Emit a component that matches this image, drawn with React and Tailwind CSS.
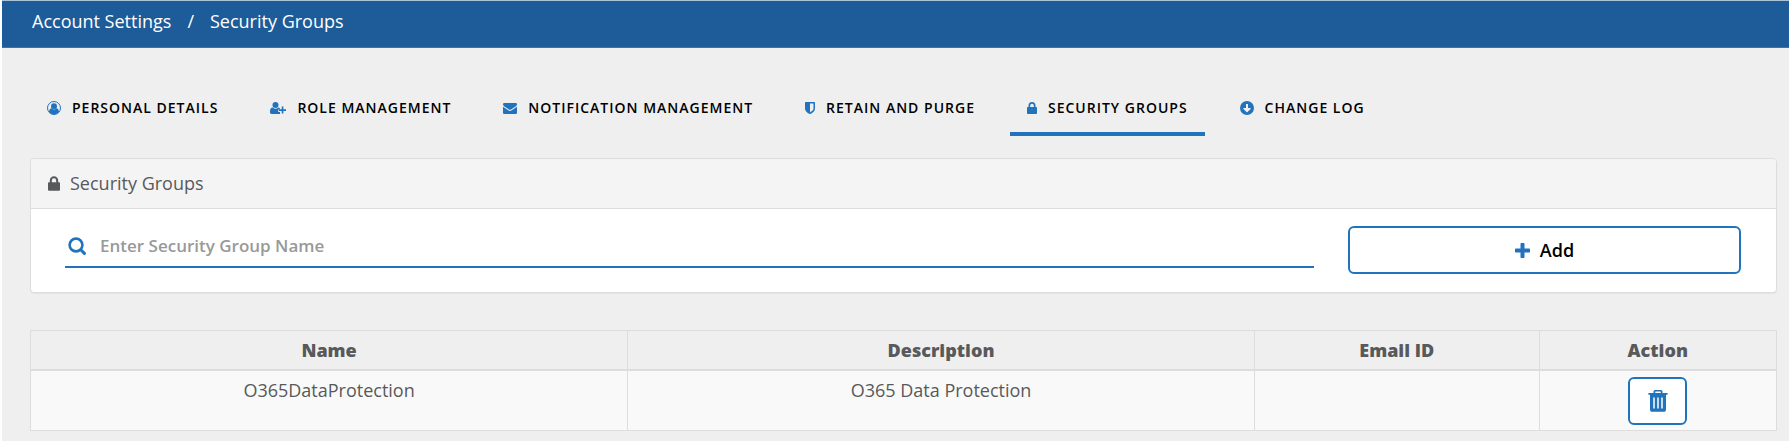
const tabs = [
  { label: 'Personal Details', icon: UserCircleIcon },
  { label: 'Role Management', icon: UserPlusIcon },
  { label: 'Notification Management', icon: EnvelopeIcon },
  { label: 'Retain and Purge', icon: ShieldIcon },
  { label: 'Security Groups', icon: LockIcon, active: true },
  { label: 'Change Log', icon: ArrowDownIcon },
];

const groups = [{ name: 'O365DataProtection', description: 'O365 Data Protection', email: '' }];

function UserCircleIcon() {
  return (
    <svg viewBox="0 0 14 14" className="h-[14px] w-[14px]" aria-hidden="true">
      <circle cx="7" cy="7" r="6.500" fill="none" stroke="currentColor" strokeWidth="1" />
      <circle cx="7" cy="5.300" r="3" fill="currentColor" />
      <path d="M1.900 10.900C2.200 8.700 3.200 7.500 4.600 7.300a3.400 3.400 0 0 0 4.800 0c1.400.2 2.400 1.400 2.700 3.600A6 6 0 0 1 7 13.300a6 6 0 0 1-5.100-2.400z" fill="currentColor" />
    </svg>
  );
}

function UserPlusIcon() {
  return (
    <svg viewBox="0 0 16 14" className="h-[14px] w-[16px]" fill="currentColor" aria-hidden="true">
      <circle cx="5.500" cy="4" r="3" />
      <path d="M2.700 6.500a4 4 0 0 0 5.600 0c.7 0 1.200.3 1.600.8V8.500H8.300v2.400H10v2.100H1.700C.7 13 0 12.400 0 11.300c0-2.300.4-4.800 2.700-4.800z" />
      <path d="M11.700 5.500h1.700v2.700H16v1.700h-2.600v2.700h-1.700V9.900H9V8.200h2.700z" />
    </svg>
  );
}

function EnvelopeIcon() {
  return (
    <svg viewBox="0 0 14 14" className="h-[14px] w-[14px]" fill="currentColor" aria-hidden="true">
      <path d="M14 5.500v6.200c0 .7-.6 1.300-1.300 1.300H1.300C.6 13 0 12.400 0 11.700V5.500c.3.3.5.500.8.700C2.200 7.200 3.600 8.100 5 9.100c.7.5 1.300.9 2 .9s1.300-.4 2-.9c1.400-1 2.800-1.900 4.200-2.900.3-.2.500-.4.8-.7z" />
      <path d="M14 3.200c0 .9-.7 1.700-1.400 2.200L8.800 8.100c-.5.3-1.200.9-1.800.9s-1.300-.6-1.800-.9L1.400 5.400C.8 5 0 4 0 3.300 0 2.600.4 2 1.300 2h11.400c.7 0 1.300.5 1.300 1.200z" />
    </svg>
  );
}

function ShieldIcon() {
  return (
    <svg viewBox="0 0 10 14" className="h-[14px] w-[10px]" fill="currentColor" aria-hidden="true">
      <path fillRule="evenodd" d="M.5 1h9c.3 0 .5.2.5.5v6c0 3.300-4.300 5.500-5 5.500S0 10.800 0 7.500v-6C0 1.200.2 1 .5 1zM5 2.500v8.800c.5-.3 3.500-1.800 3.500-3.800v-5z" />
    </svg>
  );
}

function LockIcon({ className = 'h-[14px] w-[10px]' }) {
  return (
    <svg viewBox="0 0 10 14" className={className} fill="currentColor" aria-hidden="true">
      <path fillRule="evenodd" d="M1.500 6V4.500a3.500 3.500 0 0 1 7 0V6h.7c.5 0 .8.3.8.800v5.400c0 .5-.3.8-.8.8H.8c-.5 0-.8-.3-.8-.8V6.800C0 6.300.3 6 .8 6zM3.200 6h3.600V4.500a1.800 1.800 0 0 0-3.600 0z" />
    </svg>
  );
}

function ArrowDownIcon() {
  return (
    <svg viewBox="0 0 14 14" className="h-[14px] w-[14px]" fill="currentColor" aria-hidden="true">
      <path fillRule="evenodd" d="M7 0a7 7 0 1 1 0 14A7 7 0 0 1 7 0zM6 3v4H3.400v.9L7 11.400l3.600-3.500V7H8V3z" />
    </svg>
  );
}

function SearchIcon() {
  return (
    <svg viewBox="0 0 18 18" className="h-[18px] w-[18px]" fill="none" stroke="currentColor" strokeLinecap="round" aria-hidden="true">
      <circle cx="8" cy="8" r="6.400" strokeWidth="2.600" />
      <path d="M13 13l3.400 3.400" strokeWidth="3" />
    </svg>
  );
}

function PlusIcon() {
  return (
    <svg viewBox="0 0 15 15" className="h-[15px] w-[15px]" fill="currentColor" aria-hidden="true">
      <path d="M6.200 0h2.600c.4 0 .7.3.7.700v4.800h4.800c.4 0 .7.3.7.700v2.600c0 .4-.3.7-.7.7H9.500v4.800c0 .4-.3.7-.7.7H6.200c-.4 0-.7-.3-.7-.7V9.500H.7C.3 9.500 0 9.200 0 8.800V6.200c0-.4.3-.7.7-.7h4.800V.7c0-.4.3-.7.7-.7z" />
    </svg>
  );
}

function TrashIcon() {
  return (
    <svg viewBox="0 0 20 22" className="h-[22px] w-[20px]" fill="currentColor" aria-hidden="true">
      <path fillRule="evenodd" d="M7.200 0h5.600C14 0 14.500.8 14.500 1.800V3h4.700c.3 0 .5.200.5.500v.8c0 .3-.2.500-.5.500H18v14.700c0 1.400-.9 2.300-2 2.300H4c-1.100 0-2-.9-2-2.300V4.800H.8c-.3 0-.5-.2-.5-.5v-.8c0-.3.2-.5.5-.5h4.700V1.800C5.500.8 6 0 7.200 0zM7.700 1.500c-.3 0-.5.200-.5.500v1h5.600V2c0-.3-.2-.5-.5-.5zM5.250 7.500v11h1.500v-11zM9.250 7.500v11h1.500v-11zM13.250 7.500v11h1.500v-11z" />
    </svg>
  );
}

export default function App() {
  return (
    <div className="min-h-screen border-l-2 border-white bg-[#efefef] font-['Open_Sans',sans-serif] text-[#58595b]">
      <header className="border-t border-b border-t-[#a9c3db] border-b-[#3f72a8] bg-[#1d5c99] px-[30px] pt-[7px] pb-[13px]">
        <nav aria-label="Breadcrumb" className="flex gap-4 text-lg leading-[26px] text-white">
          <a href="#account">Account Settings</a>
          <span>/</span>
          <a href="#groups">Security Groups</a>
        </nav>
      </header>

      <main className="px-7 pr-3 pb-3">
        <nav aria-label="Settings" className="flex gap-[18px] pt-10 pb-[22px]">
          {tabs.map(({ label, icon: Icon, active }) => (
            <a
              key={label}
              href="#tab"
              aria-current={active ? 'page' : undefined}
              className={`flex items-center gap-[11px] border-b-4 px-[17px] pt-2 pb-3 text-sm leading-6 font-semibold tracking-[1px] text-black uppercase ${active ? 'border-[#2273bd]' : 'border-transparent'}`}
            >
              <span className="text-[#2273bd]">
                <Icon />
              </span>
              {label}
            </a>
          ))}
        </nav>

        <section className="rounded border border-[#dddddd] bg-white shadow-[0_1px_1px_rgba(0,0,0,0.05)]">
          <h1 className="flex items-center gap-[10px] rounded-t border-b border-[#dddddd] bg-[#f4f4f4] px-[17px] py-3 text-lg leading-[25px]">
            <LockIcon className="h-[17px] w-[12px]" />
            Security Groups
          </h1>
          <form className="flex items-start gap-[34px] pr-[35px] pl-[34px] pt-[17px] pb-[18px]" onSubmit={(e) => e.preventDefault()}>
            <label className="flex h-[42px] grow items-center gap-[14px] border-b-2 border-[#2273bd] pl-[3px] text-[#2273bd]">
              <SearchIcon />
              <input
                type="text"
                aria-label="Security group name"
                placeholder="Enter Security Group Name"
                className="grow text-[17px] font-semibold text-black outline-none placeholder:text-[#999999]"
              />
            </label>
            <button type="submit" className="flex h-12 w-[393px] items-center justify-center gap-[10px] rounded-md border-2 border-[#2273bd] bg-white text-lg font-semibold text-black">
              <span className="text-[#2273bd]">
                <PlusIcon />
              </span>
              Add
            </button>
          </form>
        </section>

        <table className="mt-[37px] w-full table-fixed border-collapse border border-[#dddddd] text-center text-lg leading-6">
          <thead>
            <tr>
              <th className="w-[34.2%] border border-b-2 border-[#dddddd] py-[7px] font-extrabold">Name</th>
              <th className="w-[35.9%] border border-b-2 border-[#dddddd] font-extrabold">Description</th>
              <th className="w-[16.3%] border border-b-2 border-[#dddddd] font-extrabold">Email ID</th>
              <th className="w-[13.6%] border border-b-2 border-[#dddddd] font-extrabold">Action</th>
            </tr>
          </thead>
          <tbody>
            {groups.map((group) => (
              <tr key={group.name} className="bg-[#f9f9f9] align-top">
                <td className="border border-[#dddddd] pt-[7px]">{group.name}</td>
                <td className="border border-[#dddddd] pt-[7px]">{group.description}</td>
                <td className="border border-[#dddddd] pt-[7px]">{group.email}</td>
                <td className="border border-[#dddddd] pt-[6px] pb-[5px]">
                  <button type="button" aria-label="Delete" className="mx-auto flex h-12 w-[59px] items-center justify-center rounded-md border-2 border-[#2273bd] bg-white text-[#2273bd]">
                    <TrashIcon />
                  </button>
                </td>
              </tr>
            ))}
          </tbody>
        </table>
      </main>
    </div>
  );
}
